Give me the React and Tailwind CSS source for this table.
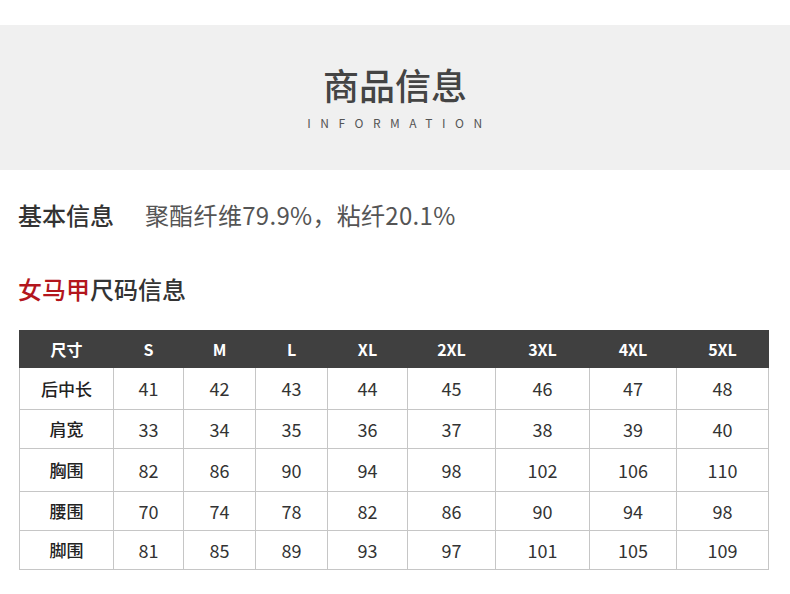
import React from "react";

const sizes = ["S", "M", "L", "XL", "2XL", "3XL", "4XL", "5XL"];
const colWidths = [94, 70, 72, 72, 80, 88, 94, 87, 92];

const rows = [
  { name: "后中长", h: 42, values: [41, 42, 43, 44, 45, 46, 47, 48] },
  { name: "肩宽", h: 39, values: [33, 34, 35, 36, 37, 38, 39, 40] },
  { name: "胸围", h: 43, values: [82, 86, 90, 94, 98, 102, 106, 110] },
  { name: "腰围", h: 39, values: [70, 74, 78, 82, 86, 90, 94, 98] },
  { name: "脚围", h: 39, values: [81, 85, 89, 93, 97, 101, 105, 109] },
];

const font = { fontFamily: '"Noto Sans CJK SC", "Noto Sans", sans-serif' };

function App() {
  return (
    <div className="w-[790px] h-[594px] bg-white overflow-hidden" style={font}>
      <div className="h-[25px]" />
      <div className="h-[145px] bg-[#f0f0f0] flex flex-col items-center pt-[34px]">
        <h1 className="text-[36px] leading-[50px] font-medium text-[#444]">商品信息</h1>
        <p className="mt-[7px] text-[12px] leading-[14px] tracking-[9.5px] pl-[9px] text-[#555]">INFORMATION</p>
      </div>

      <div className="px-[18px] pt-[28px] flex items-center text-[24px] leading-[34px]">
        <span className="font-medium text-[#333]">基本信息</span>
        <span className="ml-[31px] font-normal text-[#555] tracking-[0.3px]">聚酯纤维79.9%，粘纤20.1%</span>
      </div>

      <div className="px-[18px] pt-[40px] text-[24px] leading-[34px] font-medium">
        <span className="text-[#b3161d]">女马甲</span>
        <span className="text-[#333]">尺码信息</span>
      </div>

      <div className="pl-[19px] pt-[24px]">
        <table className="border-collapse table-fixed w-[749px]">
          <colgroup>
            {colWidths.map((w, i) => (
              <col key={i} style={{ width: w }} />
            ))}
          </colgroup>
          <thead>
            <tr className="bg-[#404040] text-white h-[37px]">
              <th className="font-semibold text-[16px] border border-[#404040]">尺寸</th>
              {sizes.map((s) => (
                <th key={s} className="font-semibold text-[16px] border border-[#404040]">
                  {s}
                </th>
              ))}
            </tr>
          </thead>
          <tbody>
            {rows.map((r) => (
              <tr key={r.name} style={{ height: r.h }}>
                <td className="border border-[#c6c6c6] text-center text-[17px] font-medium text-[#222]">
                  {r.name}
                </td>
                {r.values.map((v, i) => (
                  <td key={i} className="border border-[#c6c6c6] text-center text-[18px] text-[#333]">
                    {v}
                  </td>
                ))}
              </tr>
            ))}
          </tbody>
        </table>
      </div>
    </div>
  );
}

export default App;
